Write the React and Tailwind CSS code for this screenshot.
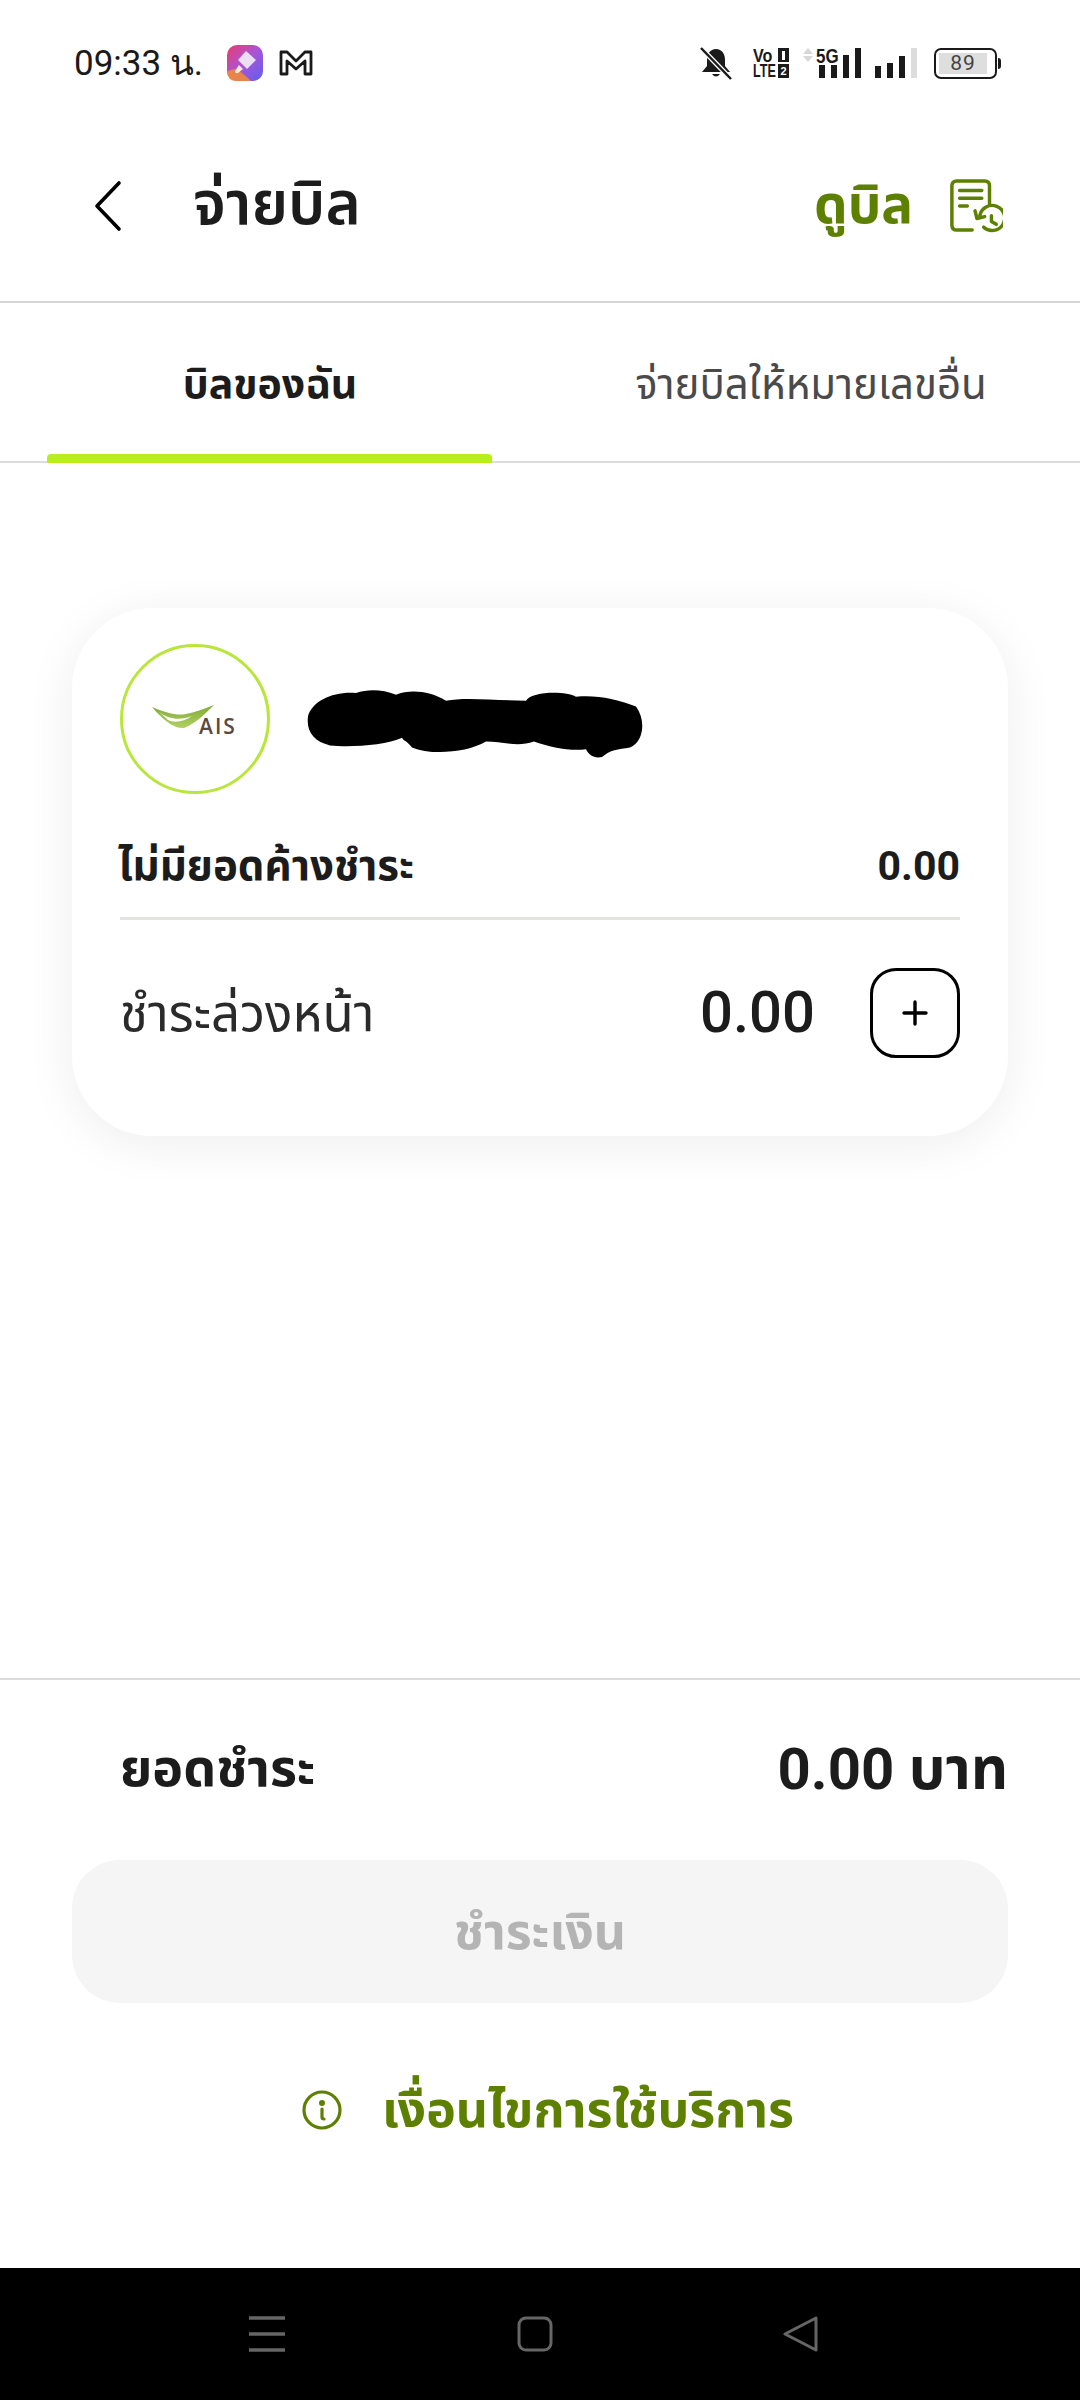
const font = { fontFamily: '"Roboto", "Noto Sans Thai", "Loma", sans-serif' };

function StatusBar() {
  return (
    <div className="flex h-[130px] items-center justify-between pl-[74px] pr-[79px] pb-[4px]">
      <div className="flex items-center">
        <span className="font-['Roboto',sans-serif] text-[35px] leading-none text-[#1a1a1a]">09:33 น.</span>
        <svg width="36" height="36" viewBox="0 0 36 36" className="ml-[24px]">
          <defs>
            <linearGradient id="g1" x1="0" y1="0" x2="1" y2="1">
              <stop offset="0" stopColor="#ec3a6c" />
              <stop offset="0.5" stopColor="#a855d8" />
              <stop offset="1" stopColor="#5a5ff0" />
            </linearGradient>
          </defs>
          <rect width="36" height="36" rx="10" fill="url(#g1)" />
          <path d="M0 26 Q0 36 10 36 H24 Q14 26 8 24 Z" fill="#ef8a3c" opacity="0.9" />
          <path d="M19 6 L29 15 L20 24 L11 15 Z" fill="#ecdff5" />
          <path d="M12 20 L16 24 L11 28 Q8 29 8 26 Z" fill="#fde9d9" />
        </svg>
        <svg width="34" height="28" viewBox="0 0 34 28" className="ml-[16px]" fill="none" stroke="#1a1a1a" strokeWidth="2.8" strokeLinejoin="round">
          <path d="M2 3 H8 L17 12 L26 3 H32 V25 H26 V12 L17 20 L8 12 V25 H2 Z" />
        </svg>
      </div>
      <div className="flex items-center">
        <svg width="34" height="34" viewBox="0 0 34 34">
          <path d="M17 3 C23 3 26 8 26 14 V20 L31 26 H3 L8 20 V14 C8 8 11 3 17 3 Z" fill="#1a1a1a" />
          <path d="M13 28 H21 Q17 33 13 28 Z" fill="#1a1a1a" />
          <path d="M2 2 L32 33" stroke="#fff" strokeWidth="5" />
          <path d="M2 2 L32 33" stroke="#1a1a1a" strokeWidth="2.5" />
        </svg>
        <div className="ml-[20px] flex w-[36px] flex-col items-start font-['Liberation_Sans',sans-serif] text-[#1a1a1a]">
          <div className="flex h-[15px] w-full items-center justify-between text-[19px] font-bold leading-none">
            <span className="w-[24px] origin-left scale-x-85 whitespace-nowrap">Vo</span>
            <span className="flex h-[14px] w-[11px] shrink-0 items-center justify-center bg-[#1a1a1a]">
              <span className="h-[9px] w-[3px] bg-white" />
            </span>
          </div>
          <div className="mt-[1px] flex h-[15px] w-full items-center justify-between text-[18px] font-bold leading-none">
            <span className="w-[24px] origin-left scale-x-70 whitespace-nowrap">LTE</span>
            <span className="flex h-[14px] w-[11px] shrink-0 items-center justify-center bg-[#1a1a1a] text-[11px] text-white">2</span>
          </div>
        </div>
        <div className="ml-[14px] flex -translate-y-[8px] flex-col gap-[2px]">
          <span className="h-0 w-0 border-x-[5px] border-b-[6px] border-x-transparent border-b-[#d8d8d8]" />
          <span className="h-0 w-0 border-x-[5px] border-t-[6px] border-x-transparent border-t-[#d8d8d8]" />
        </div>
        <div className="relative ml-[6px] flex h-[30px] items-end gap-[6px]">
          <span className="absolute -left-[3px] -top-[2px] origin-left scale-x-85 font-['Liberation_Sans',sans-serif] text-[20px] font-bold leading-none text-[#1a1a1a]">5G</span>
          <span className="h-[13px] w-[6px] bg-[#1a1a1a]" />
          <span className="h-[13px] w-[6px] bg-[#1a1a1a]" />
          <span className="h-[23px] w-[6px] bg-[#1a1a1a]" />
          <span className="h-[30px] w-[6px] bg-[#1a1a1a]" />
        </div>
        <div className="ml-[14px] flex h-[30px] items-end gap-[6px]">
          <span className="h-[12px] w-[6px] bg-[#1a1a1a]" />
          <span className="h-[15px] w-[6px] bg-[#1a1a1a]" />
          <span className="h-[22px] w-[6px] bg-[#1a1a1a]" />
          <span className="h-[30px] w-[6px] bg-[#dcdcdc]" />
        </div>
        <div className="ml-[17px] flex items-center">
          <div className="flex h-[31px] w-[63px] items-center rounded-[7px] border-[2px] border-[#1a1a1a] p-[3px]">
            <span className="flex h-full w-[48px] items-center justify-center bg-[#dedede] font-['Roboto',sans-serif] text-[21px] leading-none tracking-[1px] text-[#444]">89</span>
          </div>
          <span className="ml-[1px] h-[11px] w-[3px] rounded-r-sm bg-[#1a1a1a]" />
        </div>
      </div>
    </div>
  );
}

function Header() {
  return (
    <header className="flex h-[173px] items-center border-b-2 border-[#d6d6d6] pb-[20px] pr-[77px]">
      <svg width="28" height="52" viewBox="0 0 28 52" fill="none" stroke="#000" strokeWidth="3.6" strokeLinecap="round" strokeLinejoin="round" className="ml-[94px]">
        <path d="M25 3 L3 26 L25 49" />
      </svg>
      <h1 className="ml-[71px] -translate-y-[2px] text-[60px] font-semibold leading-none text-[#1c1c1c]">จ่ายบิล</h1>
      <span className="ml-auto text-[53px] font-bold leading-none text-[#5e8000]">ดูบิล</span>
      <svg width="54" height="54" viewBox="0 0 56 56" fill="none" stroke="#5e8000" strokeWidth="3.6" strokeLinecap="round" strokeLinejoin="round" className="ml-[36px]">
        <path d="M24 53 H8 Q3 53 3 48 V7 Q3 2 8 2 H37 Q42 2 42 7 V26" />
        <path d="M11 12 H34 M11 20 H34 M11 28 H19" />
        <path d="M32 38 A13 13 0 1 1 36 50" />
        <path d="M27 33 L29 41 L37 39" />
        <path d="M44 38 V44 L49 47" />
      </svg>
    </header>
  );
}

function Tabs() {
  return (
    <div className="flex h-[160px] border-b-2 border-[#dcdcdc] leading-none">
      <div className="relative flex w-[540px] items-center justify-center pt-[5px] text-[41px] font-bold text-[#1c1c1c]">
        บิลของฉัน
        <span className="absolute -bottom-[2px] left-[47px] h-[9px] w-[445px] rounded-t-[4px] bg-[#b9ee1e]" />
      </div>
      <div className="flex flex-1 items-center justify-center pl-[2px] pt-[5px] text-[42px] text-[#4a4a4a]">จ่ายบิลให้หมายเลขอื่น</div>
    </div>
  );
}

function AccountCard() {
  return (
    <section className="mx-[72px] mt-[145px] h-[528px] rounded-[80px] bg-white px-[48px] pt-[36px] shadow-[0_8px_50px_rgba(0,0,0,0.07)]">
      <div className="flex items-center">
        <div className="relative flex h-[150px] w-[150px] items-center justify-center rounded-full border-[3px] border-[#b9e63c]">
          <svg width="62" height="24" viewBox="0 0 62 24" className="absolute left-[29px] top-[58px]">
            <defs>
              <linearGradient id="g2" x1="0" y1="0" x2="0" y2="1">
                <stop offset="0" stopColor="#7da832" />
                <stop offset="1" stopColor="#b3d166" />
              </linearGradient>
            </defs>
            <path d="M0 2 C14 8 26 11 34 9 C44 7 54 3 62 0 C54 8 44 18 32 23 C22 24 10 14 0 2 Z" fill="url(#g2)" />
            <path d="M7 7 C16 14 28 16 40 11 C32 17 22 18 16 15 Z" fill="#fff" />
          </svg>
          <span className="absolute left-[76px] top-[69px] font-['Open_Sans',sans-serif] text-[21px] font-semibold leading-none tracking-[2px] text-[#5b4a42]">AIS</span>
        </div>
        <svg width="338" height="72" viewBox="0 0 338 74" preserveAspectRatio="none" className="ml-[36px] mt-[12px]">
          <path d="M2 28 C6 12 28 2 50 4 C62 0 76 0 90 6 C104 0 124 2 140 12 C160 8 190 12 220 12 C226 2 260 2 270 8 C290 6 310 10 330 18 C340 32 338 54 324 60 C312 62 304 62 296 70 C286 72 282 66 280 62 C264 64 244 60 228 54 C212 60 196 54 180 54 C160 66 124 68 106 60 C98 50 100 56 96 50 C80 58 44 60 24 58 C8 54 0 44 2 28 Z" fill="#000" />
        </svg>
      </div>
      <div className="mt-[45px] flex items-center justify-between border-b-[3px] border-[#e2e2e0] pb-[24px] text-[42px] font-bold leading-[54px] text-[#1c1c1c]">
        <span className="-ml-[2px]">ไม่มียอดค้างชำระ</span>
        <span className="text-[41px]">0.00</span>
      </div>
      <div className="mt-[48px] flex items-center">
        <span className="text-[51px] leading-none text-[#2a2a2a]">ชำระล่วงหน้า</span>
        <span className="ml-auto -translate-y-[1px] text-[58px] font-medium leading-none text-[#1c1c1c]">0.00</span>
        <button className="ml-[55px] flex h-[90px] w-[90px] items-center justify-center rounded-[26px] border-[3px] border-black">
          <svg width="26" height="26" viewBox="0 0 26 26" stroke="#000" strokeWidth="3.4" strokeLinecap="round">
            <path d="M13 2 V24 M2 13 H24" />
          </svg>
        </button>
      </div>
    </section>
  );
}

function Footer() {
  return (
    <footer className="h-[590px] border-t-2 border-[#dcdcdc] px-[72px]">
      <div className="mt-[60px] flex items-center justify-between">
        <span className="ml-[48px] text-[52px] font-bold leading-none text-[#1c1c1c]">ยอดชำระ</span>
        <span className="text-[58px] font-bold leading-none text-[#1c1c1c]">0.00 บาท</span>
      </div>
      <button className="mt-[62px] flex h-[143px] w-full items-center justify-center rounded-[48px] bg-[#f5f5f5] text-[50px] font-bold leading-none text-[#b4b4b4]">
        ชำระเงิน
      </button>
      <div className="mt-[82px] flex items-center justify-center pl-[16px]">
        <svg width="40" height="40" viewBox="0 0 40 40" fill="none" stroke="#5e8000" strokeWidth="3.2" strokeLinecap="round">
          <circle cx="20" cy="20" r="18" />
          <circle cx="20" cy="13" r="1.4" fill="#5e8000" />
          <path d="M20 19 V27 Q20 29 22 29" />
        </svg>
        <span className="ml-[40px] text-[50px] font-bold leading-none text-[#5e8000]">เงื่อนไขการใช้บริการ</span>
      </div>
    </footer>
  );
}

function NavBar() {
  return (
    <nav className="relative flex h-[132px] bg-black">
      <svg width="36" height="36" viewBox="0 0 36 36" stroke="#666" strokeWidth="3.6" className="absolute left-[249px] top-[48px]">
        <path d="M0 2 H36 M0 18 H36 M0 34 H36" />
      </svg>
      <svg width="36" height="36" viewBox="0 0 36 36" fill="none" stroke="#666" strokeWidth="3" className="absolute left-[517px] top-[48px]">
        <rect x="2" y="2" width="32" height="32" rx="7" />
      </svg>
      <svg width="36" height="36" viewBox="0 0 36 36" fill="none" stroke="#666" strokeWidth="3" strokeLinejoin="round" className="absolute left-[783px] top-[48px]">
        <path d="M33 2 V34 L2 18 Z" />
      </svg>
    </nav>
  );
}

export default function App() {
  return (
    <div className="flex h-[2400px] w-[1080px] flex-col overflow-hidden bg-white" style={font}>
      <StatusBar />
      <Header />
      <Tabs />
      <main className="flex-1">
        <AccountCard />
      </main>
      <Footer />
      <NavBar />
    </div>
  );
}
